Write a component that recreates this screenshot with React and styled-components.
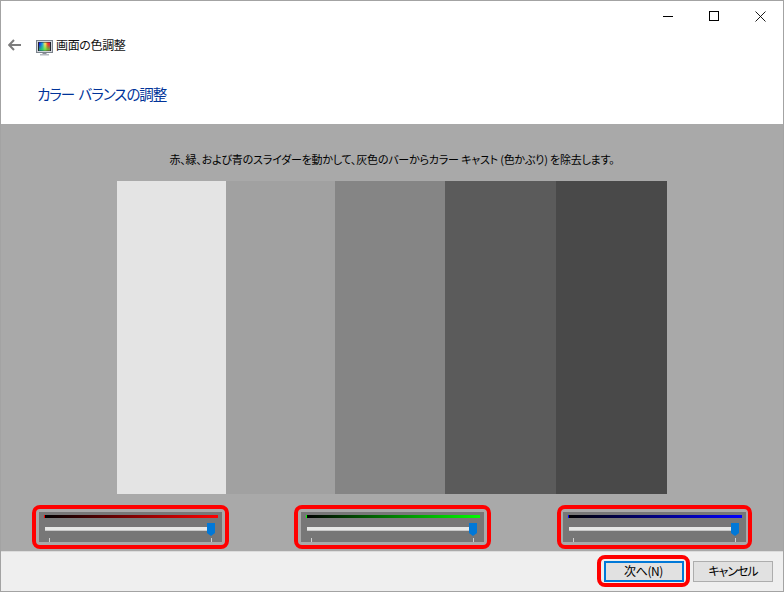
import React from 'react';
import styled, { createGlobalStyle } from 'styled-components';

const Global = createGlobalStyle`
  html, body { margin: 0; padding: 0; background: #fff; }
  * { box-sizing: border-box; }
  #root { width: 784px; height: 592px; }
`;
const FONT = `"Noto Sans CJK JP", "Noto Sans", sans-serif`;

const Window = styled.div`
  width: 784px; height: 592px; border: 1px solid #a3a3a3;
  display: flex; flex-direction: column; font-family: ${FONT}; background: #fff;
  font-feature-settings: "palt" 1;
`;
const Header = styled.header`
  height: 123px; display: flex; flex-direction: column; flex: none;
`;
const TitleBar = styled.div`
  height: 29px; display: flex; justify-content: flex-end;
`;
const WinButton = styled.div`
  width: 46px; height: 29px; display: flex; align-items: center; justify-content: center;
  padding-top: 1px;
`;
const NavRow = styled.div`
  height: 30px; display: flex; align-items: center; padding-left: 7px;
`;
const Caption = styled.span`
  font-size: 12px; line-height: 16px; color: #111; margin-left: 3px; letter-spacing: -0.35px;
`;
const MonitorWrap = styled.div`
  width: 17px; height: 16px; margin-left: 15px;
`;
const Heading = styled.h1`
  margin: 23px 0 0 36px; font-size: 14.5px; line-height: 22px; font-weight: 400; color: #003399;
  letter-spacing: -1px; word-spacing: 2px;
`;
const Content = styled.main`
  flex: 1; background: #a9a9a9; display: flex; flex-direction: column; align-items: center;
`;
const Instruction = styled.p`
  margin: 27px 0 14px; height: 16px; font-size: 11px; line-height: 16px; color: #000;
  letter-spacing: -0.2px; white-space: nowrap;
`;
const Bars = styled.div`
  display: flex; width: 550px; height: 313px;
`;
const Bar = styled.div`
  width: ${p => p.$w}px; background: ${p => p.$c};
`;
const SliderRow = styled.div`
  width: 100%; display: flex; padding: 0 0 0 31px; margin-top: 11px;
`;
const Highlight = styled.div`
  width: ${p => p.$w || 197}px; height: 44px; border: 4px solid #ff0000; border-radius: 8px;
  padding: 3px ${p => p.$pad ?? 3}px; margin-left: ${p => p.$ml || 0}px; flex: none;
`;
const SliderGroup = styled.div`
  height: 30px; background: #777; position: relative; padding: 3px 4px 0 5px;
`;
const Ramp = styled.div`
  height: 3px; background: linear-gradient(90deg, #000, ${p => p.$c});
  border-left: 1px solid ${p => p.$c};
`;
const Track = styled.div`
  height: 4px; margin: 9px 9px 0 1px; background: #e6e8e6; border-bottom: 1px solid #c8c8c8; position: relative;
`;
const Thumb = styled.svg`
  position: absolute; right: -6px; top: -4px; width: 8px; height: 13px;
`;
const Ticks = styled.div`
  display: flex; justify-content: space-between; margin: 7px 0 0 5px; width: 163px;
`;
const Tick = styled.span`
  width: 1px; height: 4px; background: #cfcfcf;
`;
const Footer = styled.footer`
  height: 40px; flex: none; background: #efefef; border-top: 1px solid #dcdcdc;
  display: flex; align-items: flex-start; justify-content: flex-end; padding: 3px 10px 0 0; gap: 3px;
`;
const ButtonRing = styled.div`
  width: 93px; height: 32px; border: 4px solid #ff0000; border-radius: 8px;
  display: flex; justify-content: center; padding-top: 2px;
`;
const Button = styled.div`
  width: 80px; height: 21px; background: #e1e1e1; font-size: 12px; line-height: ${p => p.$primary ? 16 : 18}px;
  border: ${p => p.$primary ? '2px solid #0078d7' : '1px solid #adadad'}; color: #000;
  text-align: center; white-space: nowrap; letter-spacing: ${p => p.$primary ? -0.4 : -1}px;
  margin-top: ${p => p.$mt || 0}px;
`;

const Monitor = () => (
  <svg width="17" height="16" viewBox="0 0 17 16">
    <defs>
      <linearGradient id="rb" x1="0" y1="0" x2="1" y2="0">
        <stop offset="0" stopColor="#1414f0" />
        <stop offset=".3" stopColor="#20a0e0" />
        <stop offset=".55" stopColor="#f8f060" />
        <stop offset=".8" stopColor="#f04020" />
        <stop offset="1" stopColor="#e01060" />
      </linearGradient>
      <linearGradient id="gb" x1="0" y1="0" x2="0" y2="1">
        <stop offset="0.2" stopColor="#30e040" stopOpacity="0" />
        <stop offset="1" stopColor="#30e040" stopOpacity=".8" />
      </linearGradient>
    </defs>
    <rect x="0" y="0" width="17" height="13" fill="#7c838c" />
    <rect x="1" y="1" width="15" height="11" fill="#d2d6dc" />
    <rect x="2" y="2" width="13" height="9" fill="#23262e" />
    <rect x="3" y="2.5" width="11" height="8" fill="url(#rb)" />
    <rect x="3" y="2.5" width="11" height="8" fill="url(#gb)" />
    <rect x="6.5" y="13" width="4" height="1" fill="#8a9098" />
    <rect x="4" y="14" width="9" height="1.5" fill="#b4b9c0" />
  </svg>
);

const Slider = ({ color, w, ml, pad }) => (
  <Highlight $w={w} $ml={ml} $pad={pad}>
    <SliderGroup>
      <Ramp $c={color} />
      <Track>
        <Thumb viewBox="0 0 8 13"><path d="M0 0H8V10L4 13L0 10Z" fill="#0078d7" /></Thumb>
      </Track>
      <Ticks><Tick /><Tick /></Ticks>
    </SliderGroup>
  </Highlight>
);

const BARS = [[109,'#e4e4e4'],[109,'#a1a1a1'],[110,'#858585'],[111,'#5b5b5b'],[111,'#494949']];

export default function App() {
  return (
    <Window>
      <Global />
      <Header>
        <TitleBar>
          <WinButton>
            <svg width="11" height="11" viewBox="0 0 11 11"><path d="M0 5.5H10" stroke="#000" /></svg>
          </WinButton>
          <WinButton>
            <svg width="10" height="10" viewBox="0 0 10 10"><rect x=".5" y=".5" width="9" height="9" fill="none" stroke="#000" /></svg>
          </WinButton>
          <WinButton>
            <svg width="11" height="11" viewBox="0 0 11 11"><path d="M.5 .5L10.5 10.5M10.5 .5L.5 10.5" stroke="#000" strokeWidth=".9" /></svg>
          </WinButton>
        </TitleBar>
        <NavRow>
          <svg width="13" height="12" viewBox="0 0 13 12"><path d="M6 1L1.2 6L6 11M1.2 6H13" fill="none" stroke="#7c7c7c" strokeWidth="2" /></svg>
          <MonitorWrap><Monitor /></MonitorWrap>
          <Caption>画面の色調整</Caption>
        </NavRow>
        <Heading>カラー バランスの調整</Heading>
      </Header>
      <Content>
        <Instruction>赤、緑、および青のスライダーを動かして、灰色のバーからカラー キャスト (色かぶり) を除去します。</Instruction>
        <Bars>{BARS.map(([w, c]) => <Bar key={c} $w={w} $c={c} />)}</Bars>
        <SliderRow>
          <Slider color="#ff0000" />
          <Slider color="#00ff00" ml={65} />
          <Slider color="#0000ff" w={195} ml={66} pad={2} />
        </SliderRow>
      </Content>
      <Footer>
        <ButtonRing><Button $primary>次へ(N)</Button></ButtonRing>
        <Button $mt={6}>キャンセル</Button>
      </Footer>
    </Window>
  );
}
